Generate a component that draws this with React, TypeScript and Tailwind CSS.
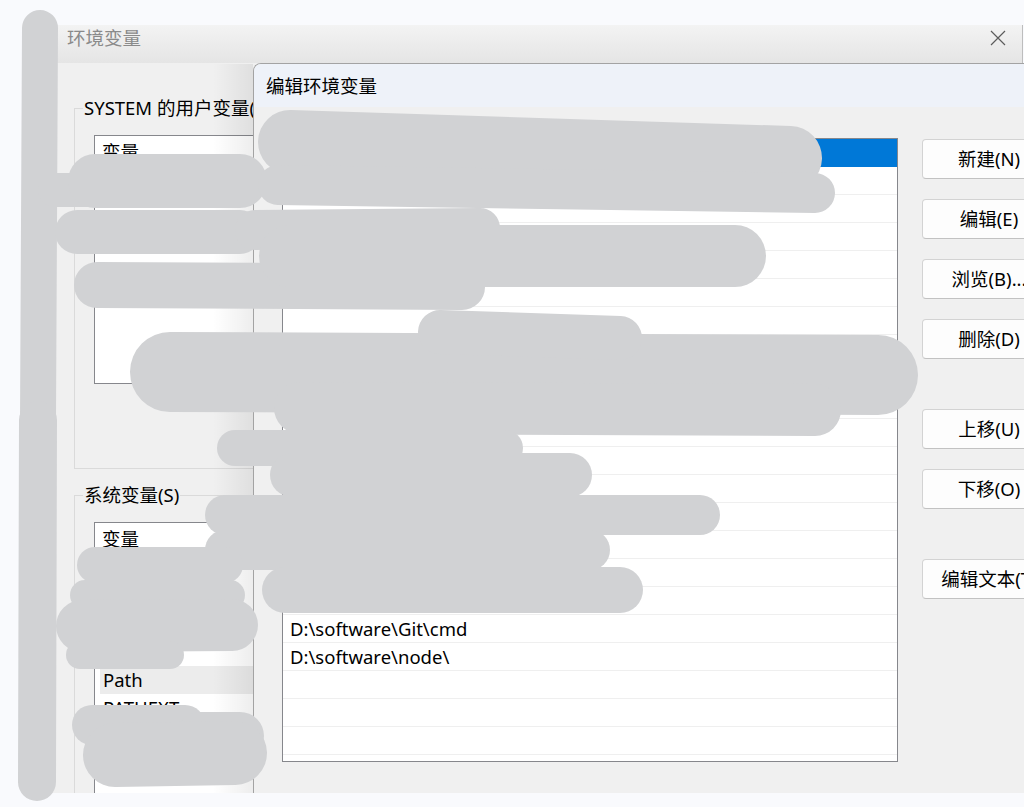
import React from 'react'

// stroke centre lines of the grey redaction scribbles: x1, y1, x2, y2, width
const scribbles: [number, number, number, number, number][] = [
  [40, 28, 38, 420, 36],
  [38, 420, 37, 782, 38],
  [55, 190, 100, 190, 34],
  [95, 181, 240, 181, 54],
  [77, 232, 240, 232, 44],
  [97, 285, 462, 287, 46],
  [290, 142, 790, 158, 64],
  [278, 185, 815, 193, 40],
  [255, 230, 480, 228, 40],
  [290, 256, 735, 256, 62],
  [170, 372, 878, 375, 80],
  [300, 408, 815, 410, 52],
  [440, 332, 620, 338, 44],
  [235, 448, 505, 448, 36],
  [292, 475, 570, 475, 44],
  [225, 515, 700, 515, 40],
  [225, 550, 590, 550, 40],
  [285, 590, 620, 590, 46],
  [95, 565, 225, 565, 36],
  [85, 595, 230, 595, 30],
  [82, 626, 232, 625, 52],
  [80, 655, 170, 655, 28],
  [92, 725, 185, 725, 40],
  [200, 736, 240, 736, 48],
  [115, 755, 235, 753, 64],
]

const paths: Record<number, string> = {
  17: 'D:\\software\\Git\\cmd',
  18: 'D:\\software\\node\\',
}

function CloseIcon() {
  return (
    <svg width="16" height="16" viewBox="0 0 16 16" className="text-[#5c5c5c]">
      <path d="M1 1 L15 15 M15 1 L1 15" stroke="currentColor" strokeWidth="1.2" fill="none" />
    </svg>
  )
}

function Button({ label, className }: { label: string; className?: string }) {
  return (
    <div
      className={`h-[40px] w-[134px] shrink-0 rounded-[4px] border border-[#d3d3d3] border-b-[#c2c2c2] bg-[#fdfdfd] flex items-center justify-center whitespace-nowrap ${className ?? ''}`}
    >
      {label}
    </div>
  )
}

function BackWindow() {
  return (
    <div className="absolute left-[22px] top-[25px] w-[1001px] h-[768px] bg-[#f0f0f0] border-r border-[#bdbdbd] overflow-hidden flex flex-col">
      <div className="h-[38px] shrink-0 flex items-center justify-between pl-[45px] pr-[16px] pb-[12px] bg-gradient-to-b from-[#f3f3f3] to-[#e5e5e5] text-[#8a8a8a]">
        <span>环境变量</span>
        <CloseIcon />
      </div>
      <div className="flex-1 pl-[52px] pt-[33px] flex flex-col">
        <fieldset className="h-[373px] w-[900px] border border-[#dadada]">
          <legend className="ml-[8px] px-[1px] leading-[24px] text-black">SYSTEM 的用户变量(U)</legend>
          <div className="mt-[15px] ml-[19px] w-[400px] h-[249px] border border-[#86878c] bg-white">
            <div className="h-[31px] flex items-center pl-[7px] text-black">变量</div>
          </div>
        </fieldset>
        <fieldset className="mt-[14px] flex-1 w-[900px] border border-[#dadada]">
          <legend className="ml-[8px] px-[1px] leading-[24px] text-black">系统变量(S)</legend>
          <div className="mt-[15px] ml-[19px] w-[400px] h-[400px] border border-[#86878c] bg-white text-black">
            <div className="h-[31px] flex items-center pl-[7px]">变量</div>
            <div className="h-[28px]" />
            <div className="h-[28px]" />
            <div className="h-[28px]" />
            <div className="h-[28px]" />
            <div className="h-[28px] ml-[5px] bg-[#ececec] flex items-center pl-[3px]">Path</div>
            <div className="h-[28px] flex items-center pl-[8px]">PATHEXT</div>
          </div>
        </fieldset>
      </div>
    </div>
  )
}

function EditDialog() {
  const rows = Array.from({ length: 23 }, (_, i) => i)
  return (
    <div className="absolute left-[253px] top-[63px] w-[820px] h-[730px] border-l border-t border-[#a3a3a3] rounded-tl-[8px] bg-[#f0f0f0] flex flex-col text-black">
      <div className="absolute left-[-41px] top-0 bottom-0 w-[40px] bg-gradient-to-r from-transparent to-black/[0.07]" />
      <div className="h-[43px] shrink-0 rounded-tl-[7px] bg-[#eef2f9] flex items-center pl-[12px]">编辑环境变量</div>
      <div className="flex pt-[31px] pl-[28px] gap-[24px]">
        <div className="w-[616px] h-[624px] shrink-0 border border-[#86878c] bg-white overflow-hidden">
          {rows.map((i) => (
            <div
              key={i}
              className={`h-[28px] flex items-center pl-[7px] border-b ${
                i === 0 ? 'bg-[#0078d7] border-[#0078d7] text-white' : 'border-[#efefef]'
              }`}
            >
              {paths[i] ?? ''}
            </div>
          ))}
        </div>
        <div className="flex flex-col pt-[1px]">
          <Button label="新建(N)" />
          <Button label="编辑(E)" className="mt-[20px]" />
          <Button label="浏览(B)..." className="mt-[20px]" />
          <Button label="删除(D)" className="mt-[20px]" />
          <Button label="上移(U)" className="mt-[50px]" />
          <Button label="下移(O)" className="mt-[20px]" />
          <Button label="编辑文本(T)" className="mt-[50px]" />
        </div>
      </div>
    </div>
  )
}

export default function App() {
  return (
    <div className="relative w-[1024px] h-[807px] overflow-hidden bg-[#f9fafd] text-[18.5px] leading-[24px] font-['Noto_Sans','Noto_Sans_CJK_SC',sans-serif]">
      <BackWindow />
      <EditDialog />
      <svg className="absolute inset-0 pointer-events-none" width="1024" height="807" viewBox="0 0 1024 807">
        {scribbles.map(([x1, y1, x2, y2, w], i) => (
          <line key={i} x1={x1} y1={y1} x2={x2} y2={y2} stroke="#d1d2d4" strokeWidth={w} strokeLinecap="round" />
        ))}
      </svg>
    </div>
  )
}
